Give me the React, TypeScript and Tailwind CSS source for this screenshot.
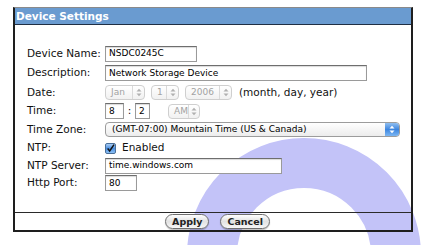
import React from 'react';

const font = { fontFamily: '"DejaVu Sans", "Lucida Grande", Verdana, sans-serif' };

function UpDown({ className = '' }: { className?: string }) {
  return (
    <svg width="6" height="9" viewBox="0 0 6 9" className={className}>
      <path d="M0.5 3.5 L3 0.8 L5.5 3.5 Z" fill="currentColor" />
      <path d="M0.5 5.5 L3 8.2 L5.5 5.5 Z" fill="currentColor" />
    </svg>
  );
}

function FakeSelect({ value, width }: { value: string; width: string }) {
  return (
    <div
      className={`${width} h-[15px] flex items-center rounded-[4px] border border-[#cfcfcf] bg-gradient-to-b from-white to-[#f1f1f1] text-[9px] text-[#a2a2a2]`}
    >
      <span className="flex-1 pl-[5px] leading-none">{value}</span>
      <span className="h-full w-[12px] border-l border-[#dadada] flex items-center justify-center text-[#b0b0b0]">
        <UpDown />
      </span>
    </div>
  );
}

function TextBox({ value, width }: { value: string; width: string }) {
  return (
    <div
      className={`${width} h-[16px] bg-white border border-[#9a9a9a] border-t-[#6e6e6e] shadow-[inset_0_1px_1px_rgba(0,0,0,0.15)] flex items-center pl-[3px] text-[9px] text-black leading-none`}
    >
      {value}
    </div>
  );
}

function Label({ children }: { children: React.ReactNode }) {
  return <div className="w-[78px] shrink-0 text-[10.5px] text-[#111]">{children}</div>;
}

function PillButton({ children }: { children: React.ReactNode }) {
  return (
    <button className="h-[15px] px-[6px] rounded-full border border-[#6f6f6f] bg-gradient-to-b from-white via-[#e2e2e2] to-[#f7f7f7] shadow-[0_1px_1px_rgba(0,0,0,0.25)] text-[9.5px] font-semibold text-[#222] leading-none flex items-center">
      {children}
    </button>
  );
}

export default function App() {
  return (
    <div className="relative w-[425px] h-[245px] bg-white overflow-hidden" style={font}>
      {/* background ring */}
      <div className="absolute left-[187px] top-[138px] w-[234px] h-[234px] rounded-full border-[50px] border-[#c3c3f8]" />

      <div className="relative ml-[13px] mt-[7px] w-[400px] border-x-2 border-b-2 border-t border-x-[#1e1e1e] border-b-[#1e1e1e] border-t-[#8a8a8a]">
        {/* Header */}
        <div className="h-[17px] bg-[#6a9bd0] border-b border-[#1f2f44] flex items-center pl-[1px] text-[10.5px] font-bold text-white leading-none">
          Device Settings
        </div>

        {/* Form */}
        <div className="pl-[12px] pt-[19px] pb-[20px]">
          <div className="h-[19px] flex items-center">
            <Label>Device Name:</Label>
            <TextBox value="NSDC0245C" width="w-[92px]" />
          </div>
          <div className="h-[20px] flex items-center">
            <Label>Description:</Label>
            <TextBox value="Network Storage Device" width="w-[262px]" />
          </div>
          <div className="h-[19px] flex items-center">
            <Label>Date:</Label>
            <div className="flex items-center gap-[6px]">
              <FakeSelect value="Jan" width="w-[40px]" />
              <FakeSelect value="1" width="w-[28px]" />
              <FakeSelect value="2006" width="w-[47px]" />
              <span className="ml-[1px] text-[10.5px] text-[#111]">(month, day, year)</span>
            </div>
          </div>
          <div className="h-[18px] flex items-center">
            <Label>Time:</Label>
            <div className="flex items-center">
              <TextBox value="8" width="w-[19px]" />
              <span className="w-[11px] text-center text-[10.5px] text-[#111]">:</span>
              <TextBox value="2" width="w-[15px]" />
              <div className="ml-[18px]">
                <FakeSelect value="AM" width="w-[32px]" />
              </div>
            </div>
          </div>
          <div className="h-[19px] flex items-center">
            <Label>Time Zone:</Label>
            <div className="w-[295px] h-[15px] flex items-center rounded-[4px] border border-[#9c9c9c] bg-gradient-to-b from-white to-[#ececec] text-[9px] text-black">
              <span className="flex-1 pl-[6px] leading-none">(GMT-07:00) Mountain Time (US &amp; Canada)</span>
              <span className="h-full w-[14px] rounded-r-[3px] bg-gradient-to-b from-[#8fbef0] via-[#3d86df] to-[#7cb6f2] flex items-center justify-center text-white">
                <UpDown />
              </span>
            </div>
          </div>
          <div className="h-[18px] flex items-center">
            <Label>NTP:</Label>
            <div className="flex items-center gap-[6px]">
              <span className="w-[11px] h-[11px] rounded-[2px] border border-[#4a6f99] bg-gradient-to-b from-[#a9cdf5] via-[#4b8fe0] to-[#8cc0f5] flex items-center justify-center">
                <svg width="11" height="11" viewBox="0 0 11 11">
                  <path d="M2 5.5 L4.5 8.5 L9.8 0.8" stroke="#111" strokeWidth="1.8" fill="none" />
                </svg>
              </span>
              <span className="text-[10.5px] text-[#111]">Enabled</span>
            </div>
          </div>
          <div className="h-[17px] flex items-center">
            <Label>NTP Server:</Label>
            <TextBox value="time.windows.com" width="w-[177px]" />
          </div>
          <div className="h-[18px] flex items-center">
            <Label>Http Port:</Label>
            <TextBox value="80" width="w-[32px]" />
          </div>
        </div>

        {/* Footer */}
        <div className="h-[18px] border-t border-[#2a2a2a] flex items-center justify-center gap-[11px] pl-[9px]">
          <PillButton>Apply</PillButton>
          <PillButton>Cancel</PillButton>
        </div>
      </div>
    </div>
  );
}
